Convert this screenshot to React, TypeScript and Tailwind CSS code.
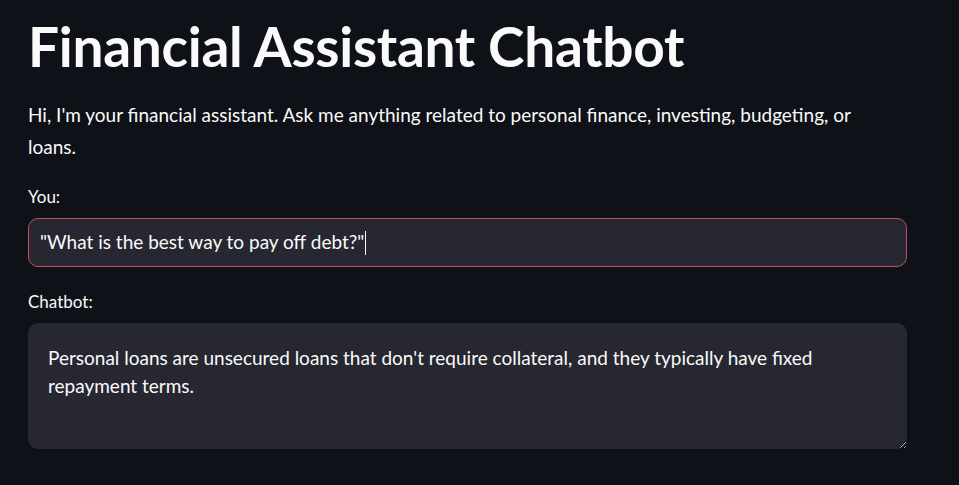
export default function App() {
  return (
    <div className="min-h-screen w-full bg-[#0e1117] text-[#fafafa] font-['Source_Sans_Pro','Lato',sans-serif]">
      <div className="px-7 pt-[14px]">
        <h1 className="text-[55px] font-bold leading-[64px] tracking-[-0.3px]">Financial Assistant Chatbot</h1>

        <p className="mt-[21px] text-[19px] leading-[32px] max-w-[860px]">
          Hi, I'm your financial assistant. Ask me anything related to personal finance, investing, budgeting, or loans.
        </p>

        <div className="mt-[23px]">
          <label className="block text-[17px] leading-[22px]">You:</label>
          <div className="mt-[10px] w-[879px] h-[49px] rounded-[10px] border border-[#b9545c] bg-[#262730] px-[11px] flex items-center text-[19px]">
            <span>"What is the best way to pay off debt?"</span>
            <span className="ml-px w-px h-[24px] bg-[#fafafa]" />
          </div>
        </div>

        <div className="mt-[24px]">
          <label className="block text-[17px] leading-[22px]">Chatbot:</label>
          <textarea
            readOnly
            className="mt-[10px] block w-[879px] h-[126px] rounded-[10px] bg-[#262730] px-[20px] pt-[21px] text-[19px] leading-[28px] text-[#fafafa] outline-none resize-y [color-scheme:dark] font-['Source_Sans_Pro','Lato',sans-serif]"
            defaultValue="Personal loans are unsecured loans that don't require collateral, and they typically have fixed repayment terms."
          />
        </div>
      </div>
    </div>
  );
}
